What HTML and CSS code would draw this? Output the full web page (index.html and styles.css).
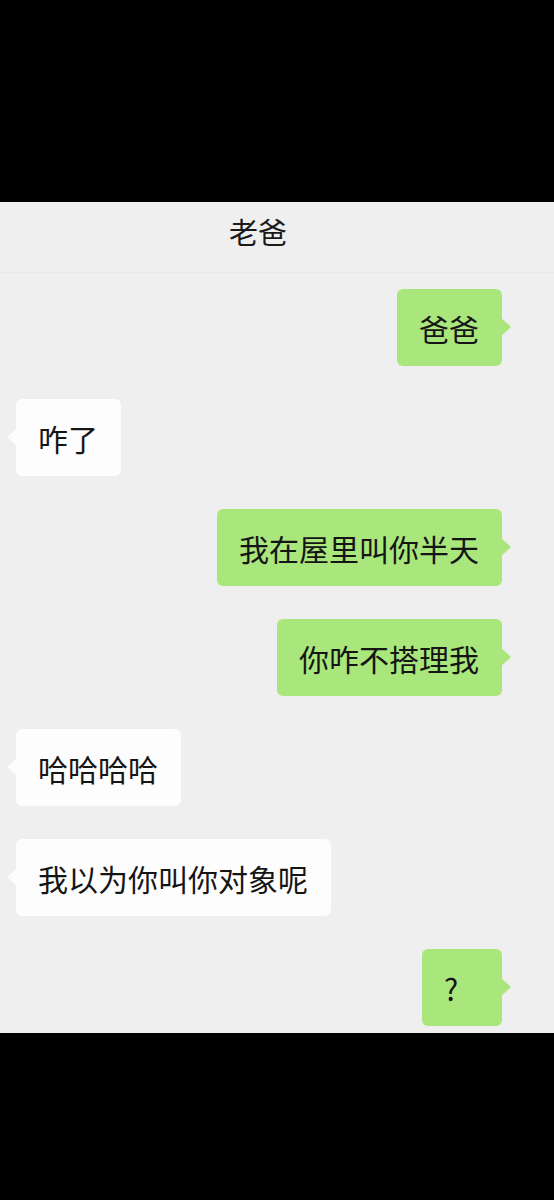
FILE: index.html
```html
<!DOCTYPE html>
<html lang="zh-CN">
<head>
    <meta charset="UTF-8">
    <meta name="viewport" content="width=device-width, initial-scale=1.0">
    <title>老爸</title>
    <link rel="stylesheet" href="styles.css">
</head>
<body>

    <div class="screen">
        <div class="top-bar"></div>

        <!-- Chat window -->
        <div class="chat">
            <div class="chat-title">老爸</div>

            <div class="messages">
                <div class="row me"><div class="bubble">爸爸</div></div>
                <div class="row other"><div class="bubble">咋了</div></div>
                <div class="row me"><div class="bubble">我在屋里叫你半天</div></div>
                <div class="row me"><div class="bubble">你咋不搭理我</div></div>
                <div class="row other"><div class="bubble">哈哈哈哈</div></div>
                <div class="row other"><div class="bubble">我以为你叫你对象呢</div></div>
                <div class="row me"><div class="bubble">?</div></div>
            </div>
        </div>

        <div class="bottom-bar"></div>
    </div>

</body>
</html>
```

FILE: styles.css
```css
body, html {
    margin: 0;
    padding: 0;
    background: #000;
    font-family: "Noto Sans CJK SC", "Noto Sans", sans-serif;
    color: #151515;
}

.screen {
    width: 554px;
    height: 1200px;
    display: flex;
    flex-direction: column;
}

.top-bar {
    height: 202px;
    background: #000;
}

.bottom-bar {
    flex: 1;
    background: #000;
}

/* Chat area */
.chat {
    height: 831px;
    background: #eeefee;
    overflow: hidden;
}

.chat-title {
    height: 70px;
    line-height: 58px;
    padding-right: 38px;
    text-align: center;
    font-size: 29px;
    color: #1a1a1a;
    border-bottom: 1px solid #e8eae9;
}

.messages {
    display: flex;
    flex-direction: column;
    gap: 33px;
    padding-top: 16px;
}

.row {
    display: flex;
}

.row.me {
    justify-content: flex-end;
    padding-right: 52px;
}

.row.other {
    justify-content: flex-start;
    padding-left: 16px;
}

.bubble {
    position: relative;
    height: 77px;
    padding: 0 23px 0 22px;
    box-sizing: border-box;
    display: flex;
    align-items: center;
    font-size: 30px;
    line-height: 1;
    border-radius: 6px;
}

.me .bubble {
    background: #a9e67c;
    min-width: 80px;
}

.other .bubble {
    background: #fdfdfd;
}

/* Bubble tails */
.bubble::before {
    content: "";
    position: absolute;
    top: 29px;
    border-top: 9px solid transparent;
    border-bottom: 9px solid transparent;
}

.me .bubble::before {
    right: -9px;
    border-left: 10px solid #a9e67c;
}

.other .bubble::before {
    left: -9px;
    border-right: 10px solid #fdfdfd;
}
```
